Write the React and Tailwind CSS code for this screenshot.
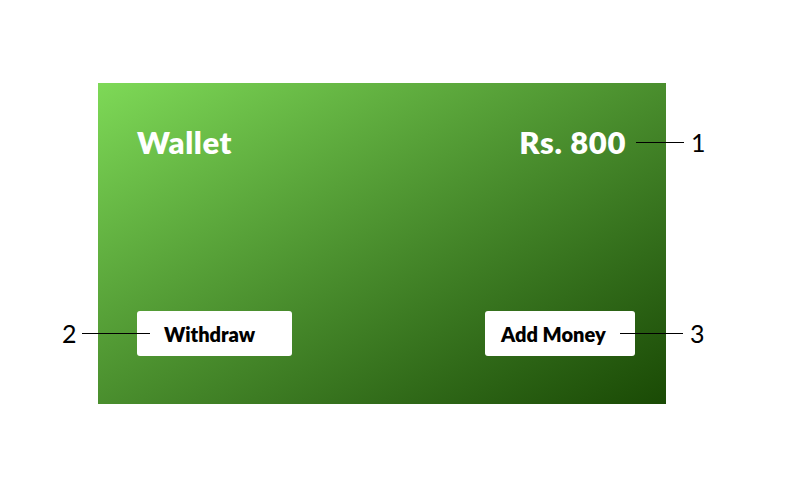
import React from 'react';

const Callout = ({ num, className, lineClass }) => (
  <div className={`absolute z-10 flex w-max items-center ${className}`}>
    {num.side === 'left' && <span className="shrink-0 text-[25px] leading-none text-black w-[20px]">{num.label}</span>}
    <span className={`block shrink-0 h-px bg-black ${lineClass}`} />
    {num.side === 'right' && <span className="shrink-0 text-[25px] leading-none text-black ml-[7px]">{num.label}</span>}
  </div>
);

const App = () => {
  return (
    <div className="w-[800px] h-[500px] bg-white pt-[83px] pl-[98px] font-['Lato',sans-serif]">
      <div className="relative w-[568px] h-[321px] bg-gradient-to-br from-[#7ed957] to-[#1a4a05] flex flex-col justify-between pl-[39px] pr-[31px] pt-[41px] pb-[48px]">
        <div className="flex items-center justify-between mr-[9px]">
          <h1 className="text-[31px] font-extrabold text-white tracking-[0.6px] leading-[36px]">Wallet</h1>
          <span className="text-[31px] font-extrabold text-white tracking-[0.6px] leading-[36px]">Rs. 800</span>
        </div>
        <div className="flex items-center justify-between">
          <button className="w-[155px] h-[45px] bg-white rounded-[3px] text-left pl-[27px] text-[20px] font-extrabold text-black">
            Withdraw
          </button>
          <button className="w-[150px] h-[45px] bg-white rounded-[3px] text-left pl-[16px] text-[20px] font-extrabold text-black">
            Add Money
          </button>
        </div>

        <Callout num={{ side: 'right', label: '1' }} className="left-[538px] top-[47px]" lineClass="w-[48px]" />
        <Callout num={{ side: 'left', label: '2' }} className="left-[-36px] top-[238px]" lineClass="w-[68px]" />
        <Callout num={{ side: 'right', label: '3' }} className="left-[522px] top-[238px]" lineClass="w-[63px]" />
      </div>
    </div>
  );
};

export default App;
